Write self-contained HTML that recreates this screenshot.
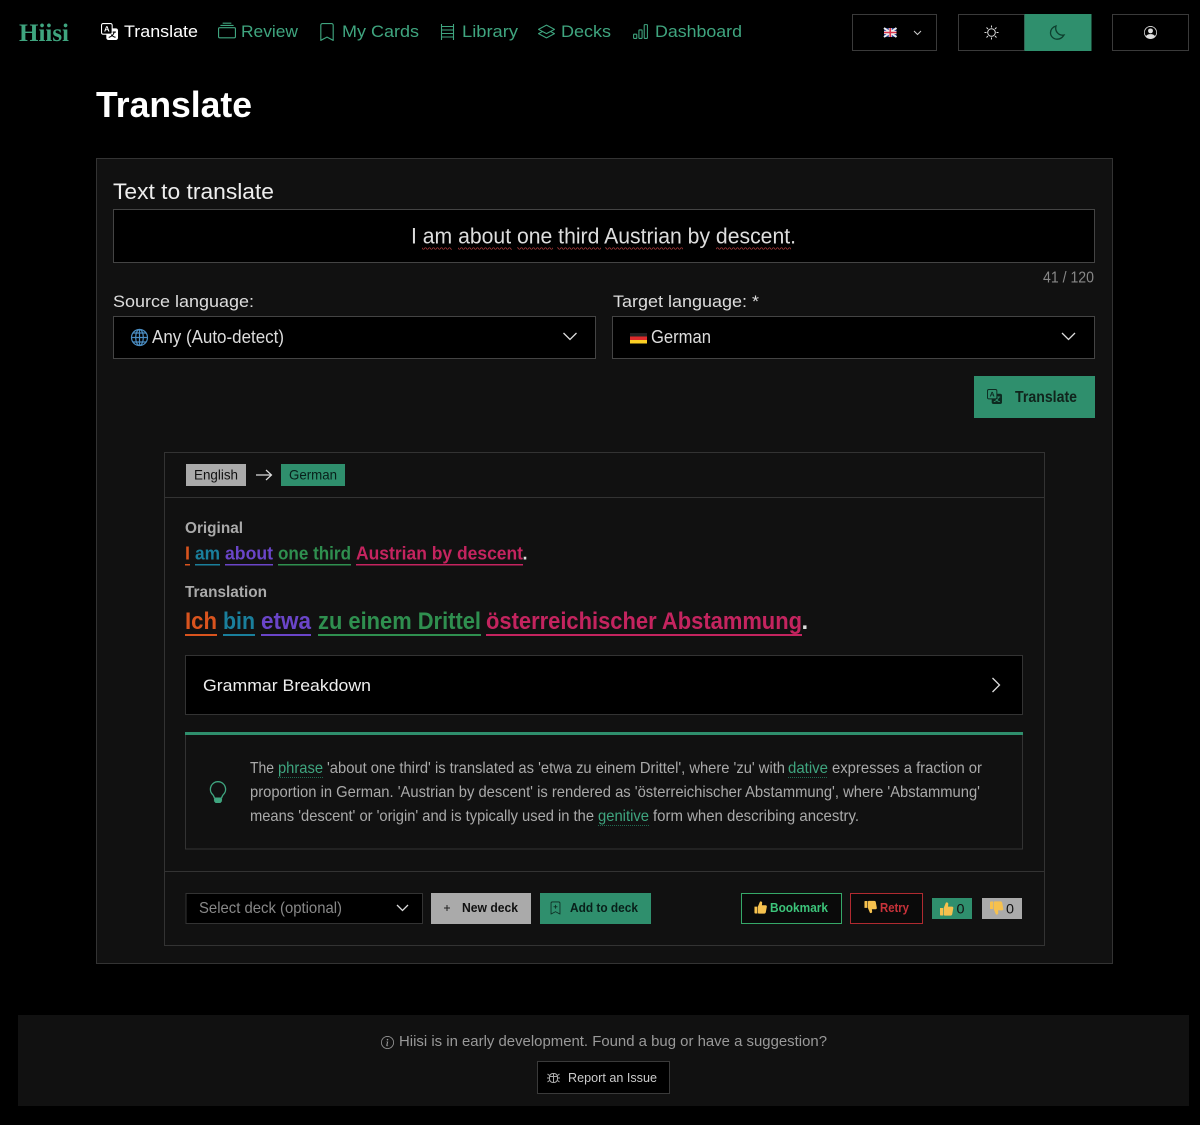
<!DOCTYPE html>
<html lang="en"><head><meta charset="utf-8"><title>Hiisi - Translate</title>
<style>
html,body{margin:0;padding:0;background:#000;width:1200px;height:1125px;overflow:hidden}
svg{display:block}
text{font-family:"Liberation Sans",sans-serif;white-space:pre}
.g{fill:#3fa57f}.bd{stroke:#3a3a3a;fill:#000}
</style></head><body>
<svg width="1200" height="1125" viewBox="0 0 1200 1125" xmlns="http://www.w3.org/2000/svg">
<defs>
<pattern id="wave" width="4" height="3" patternUnits="userSpaceOnUse" x="0" y="247"><path d="M0 2.2L1 .8L2 .8L3 2.2L4 2.2" stroke="#b8403f" stroke-width=".7" fill="none"/></pattern>
<symbol id="tr" viewBox="0 0 16 16"><path d="M4.545 6.714 4.11 8H3l1.862-5h1.284L8 8H6.833l-.435-1.286zm1.634-.736L5.5 3.956h-.049l-.679 2.022z"/><path d="M0 2a2 2 0 0 1 2-2h7a2 2 0 0 1 2 2v3h3a2 2 0 0 1 2 2v7a2 2 0 0 1-2 2H7a2 2 0 0 1-2-2v-3H2a2 2 0 0 1-2-2zm2-1a1 1 0 0 0-1 1v7a1 1 0 0 0 1 1h7a1 1 0 0 0 1-1V2a1 1 0 0 0-1-1zm7.138 9.995q.289.451.63.846c-.748.575-1.673 1.001-2.768 1.292.178.217.451.635.555.867 1.125-.359 2.08-.844 2.886-1.494.777.665 1.739 1.165 2.93 1.472.133-.254.414-.673.629-.89-1.125-.253-2.057-.694-2.82-1.284.681-.747 1.222-1.651 1.621-2.757H14V8h-3v1.047h.765c-.318.844-.74 1.546-1.272 2.13a6 6 0 0 1-.415-.492 2 2 0 0 1-.94.31"/></symbol>
<symbol id="up" viewBox="0 0 14 14"><path fill="#f6c14e" d="M.5 6h3.200v7.500H1.300a.8.8 0 0 1-.8-.8zM4.300 5.800 6.300.9c.4-.9 2.500-.6 2.500 1L8.500 4.600h4c1 0 1.500.9 1.300 1.700l-1.100 6c-.2.900-.8 1.300-1.600 1.300H5.300c-.6 0-1-.4-1-1z"/></symbol>
<symbol id="dn" viewBox="0 0 14 14"><g transform="matrix(1 0 0 -1 0 14)"><path fill="#f6c14e" d="M.5 6h3.200v7.500H1.300a.8.8 0 0 1-.8-.8zM4.300 5.800 6.300.9c.4-.9 2.500-.6 2.500 1L8.500 4.600h4c1 0 1.500.9 1.300 1.700l-1.100 6c-.2.900-.8 1.300-1.600 1.300H5.300c-.6 0-1-.4-1-1z"/></g></symbol>
</defs>
<rect width="1200" height="1125" fill="#000"/>

<!-- NAV -->
<text x="19" y="41" font-size="25" font-weight="bold" style="font-family:'Liberation Serif',serif" class="g" textLength="50" lengthAdjust="spacingAndGlyphs">Hiisi</text>
<use href="#tr" x="101" y="23" width="17" height="17" fill="#fff"/>
<text x="124" y="37" font-size="17" fill="#fff" textLength="74" lengthAdjust="spacingAndGlyphs">Translate</text>
<svg x="218" y="22" width="18" height="18" viewBox="0 0 16 16" class="g"><path d="M2.5 3.5a.5.5 0 0 1 0-1h11a.5.5 0 0 1 0 1zm2-2a.5.5 0 0 1 0-1h7a.5.5 0 0 1 0 1zM0 13a1.5 1.5 0 0 0 1.5 1.5h13A1.5 1.5 0 0 0 16 13V6a1.5 1.5 0 0 0-1.5-1.5h-13A1.5 1.5 0 0 0 0 6zm1.5.5A.5.5 0 0 1 1 13V6a.5.5 0 0 1 .5-.5h13a.5.5 0 0 1 .5.5v7a.5.5 0 0 1-.5.5z"/></svg>
<text x="241" y="37" font-size="17" class="g" textLength="57" lengthAdjust="spacingAndGlyphs">Review</text>
<svg x="318" y="23" width="18" height="18" viewBox="0 0 16 16" class="g"><path d="M2 2a2 2 0 0 1 2-2h8a2 2 0 0 1 2 2v13.5a.5.5 0 0 1-.777.416L8 13.101l-5.223 2.815A.5.5 0 0 1 2 15.5zm2-1a1 1 0 0 0-1 1v12.566l4.723-2.482a.5.5 0 0 1 .554 0L13 14.566V2a1 1 0 0 0-1-1z"/></svg>
<text x="342" y="37" font-size="17" class="g" textLength="77" lengthAdjust="spacingAndGlyphs">My Cards</text>
<path d="M441.500 24v16M453.500 24v16M441.500 26.500h12M441.500 30h12M441.500 33.500h12M441.500 37h12" fill="none" stroke="#3fa57f" stroke-width="1.100"/>
<text x="462" y="37" font-size="17" class="g" textLength="56" lengthAdjust="spacingAndGlyphs">Library</text>
<svg x="538" y="23" width="17" height="17" viewBox="0 0 16 16" class="g"><path d="M8.235 1.559a.5.5 0 0 0-.47 0l-7.5 4a.5.5 0 0 0 0 .882L3.188 8 .264 9.559a.5.5 0 0 0 0 .882l7.5 4a.5.5 0 0 0 .47 0l7.5-4a.5.5 0 0 0 0-.882L12.813 8l2.922-1.559a.5.5 0 0 0 0-.882zm3.515 7.008L14.438 10 8 13.433 1.562 10 4.250 8.567l3.515 1.874a.5.5 0 0 0 .47 0zM8 9.433 1.562 6 8 2.567 14.438 6z"/></svg>
<text x="561" y="37" font-size="17" class="g" textLength="50" lengthAdjust="spacingAndGlyphs">Decks</text>
<svg x="632" y="23" width="17" height="17" viewBox="0 0 16 16" class="g"><path d="M4 11H2v3h2zm5-4H7v7h2zm5-5v12h-2V2zm-2-1a1 1 0 0 0-1 1v12a1 1 0 0 0 1 1h2a1 1 0 0 0 1-1V2a1 1 0 0 0-1-1zM6 7a1 1 0 0 1 1-1h2a1 1 0 0 1 1 1v7a1 1 0 0 1-1 1H7a1 1 0 0 1-1-1zm-5 4a1 1 0 0 1 1-1h2a1 1 0 0 1 1 1v3a1 1 0 0 1-1 1H2a1 1 0 0 1-1-1z"/></svg>
<text x="655" y="37" font-size="17" class="g" textLength="87" lengthAdjust="spacingAndGlyphs">Dashboard</text>

<!-- top right controls -->
<rect x="852.500" y="14.500" width="84" height="36" class="bd"/>
<g transform="translate(884 28)"><rect width="12.500" height="9" rx="1" fill="#2b3f8f"/><path d="M0 0L12.500 9M12.500 0L0 9" stroke="#eee" stroke-width="2"/><path d="M6.250 0v9M0 4.500h12.500" stroke="#eee" stroke-width="3"/><path d="M6.250 0v9M0 4.500h12.500" stroke="#d8324a" stroke-width="1.600"/></g>
<path d="M914 31l3.500 3.500L921 31" fill="none" stroke="#ccc" stroke-width="1"/>
<rect x="958.500" y="14.500" width="66" height="36" class="bd"/>
<rect x="1024.500" y="14" width="67" height="37" fill="#2f8f6d"/>
<g stroke="#ddd" stroke-width="1" fill="none"><circle cx="991.500" cy="32.500" r="3.800"/><path d="M991.500 25.500v2M991.500 37.500v2M984.500 32.500h2M996.500 32.500h2M986.500 27.500l1.500 1.500M995 36l1.500 1.500M986.500 37.500l1.500-1.500M995 29l1.500-1.500"/></g>
<path d="M1056 26c-3.500 1-5.500 3.800-5.500 6.700 0 3.700 3 6.500 6.500 6.500 3 0 5.500-1.700 7-4.200-5 1-9.500-3.500-8-9z" fill="none" stroke="#0d3f2e" stroke-width="1.300"/>
<rect x="1112.500" y="14.500" width="76" height="36" class="bd"/>
<svg x="1144" y="26" width="13" height="13" viewBox="0 0 16 16" fill="#ddd"><path d="M11 6a3 3 0 1 1-6 0 3 3 0 0 1 6 0"/><path d="M0 8a8 8 0 1 1 16 0A8 8 0 0 1 0 8m8-7a7 7 0 0 0-5.468 11.370C3.242 11.226 4.805 10 8 10s4.757 1.225 5.468 2.370A7 7 0 0 0 8 1"/></svg>

<!-- TITLE -->
<text x="96" y="117" font-size="36" font-weight="bold" fill="#fff" textLength="156" lengthAdjust="spacingAndGlyphs">Translate</text>

<!-- MAIN CARD -->
<rect x="96.500" y="158.500" width="1016" height="805" fill="#111" stroke="#333"/>
<text x="113" y="199" font-size="22" fill="#eee" textLength="161" lengthAdjust="spacingAndGlyphs">Text to translate</text>
<rect x="113.500" y="209.500" width="981" height="53" fill="#000" stroke="#444"/>
<text x="411" y="243.500" font-size="22" fill="#ddd" textLength="385" lengthAdjust="spacingAndGlyphs">I am about one third Austrian by descent.</text>
<g fill="url(#wave)"><rect x="422" y="247" width="30" height="3"/><rect x="458" y="247" width="54" height="3"/><rect x="517" y="247" width="36" height="3"/><rect x="557" y="247" width="44" height="3"/><rect x="605" y="247" width="78" height="3"/><rect x="716" y="247" width="75" height="3"/></g>
<text x="1043" y="282.500" font-size="16" fill="#888" textLength="51" lengthAdjust="spacingAndGlyphs">41 / 120</text>

<text x="113" y="307" font-size="17" fill="#ddd" textLength="141" lengthAdjust="spacingAndGlyphs">Source language:</text>
<rect x="113.500" y="316.500" width="482" height="42" fill="#000" stroke="#444"/>
<g fill="none" stroke="#4b8ec4" stroke-width="1.200"><circle cx="139.500" cy="337.500" r="8"/><ellipse cx="139.500" cy="337.500" rx="3.800" ry="8"/><path d="M131.500 337.500h16M132.800 333h13.400M132.800 342h13.400M139.500 329.500v16"/></g>
<text x="152" y="343" font-size="18" fill="#ddd" textLength="132" lengthAdjust="spacingAndGlyphs">Any (Auto-detect)</text>
<path d="M563.500 333l6.500 6.500 6.500-6.500" fill="none" stroke="#ddd" stroke-width="1.300"/>

<text x="613" y="307" font-size="17" fill="#ddd" textLength="146" lengthAdjust="spacingAndGlyphs">Target language: *</text>
<rect x="612.500" y="316.500" width="482" height="42" fill="#000" stroke="#444"/>
<rect x="630" y="333" width="17" height="3.500" fill="#222"/><rect x="630" y="336.500" width="17" height="3.500" fill="#dc2a2a"/><rect x="630" y="340" width="17" height="3.500" fill="#fbcf24"/>
<text x="651" y="343" font-size="18" fill="#ddd" textLength="60" lengthAdjust="spacingAndGlyphs">German</text>
<path d="M1062 333l6.500 6.500 6.500-6.500" fill="none" stroke="#ddd" stroke-width="1.300"/>

<rect x="974" y="376" width="121" height="42" fill="#2f8f6d"/>
<use href="#tr" x="987" y="389" width="15" height="15" fill="#0d2a20"/>
<text x="1015" y="402" font-size="16" font-weight="bold" fill="#10241c" textLength="62" lengthAdjust="spacingAndGlyphs">Translate</text>

<!-- RESULT CARD -->
<rect x="164.500" y="452.500" width="880" height="493" fill="#111" stroke="#333"/>
<path d="M165 497.500h879M165 871.500h879" stroke="#333"/>
<rect x="186" y="464" width="60" height="22" fill="#aaa"/>
<text x="194" y="479.500" font-size="14" fill="#111" textLength="44" lengthAdjust="spacingAndGlyphs">English</text>
<path d="M256 475h15M266 470l5.500 5-5.500 5" fill="none" stroke="#ddd" stroke-width="1.200"/>
<rect x="281" y="464" width="64" height="22" fill="#2f8f6d"/>
<text x="289" y="479.500" font-size="14" fill="#08201a" textLength="48" lengthAdjust="spacingAndGlyphs">German</text>

<text x="185" y="533" font-size="16" font-weight="bold" fill="#aaa" textLength="58" lengthAdjust="spacingAndGlyphs">Original</text>
<g font-size="18" font-weight="bold">
<text x="185" y="559.500" fill="#d9541e" textLength="5" lengthAdjust="spacingAndGlyphs">I</text>
<text x="195" y="559.500" fill="#1a7f9c" textLength="25" lengthAdjust="spacingAndGlyphs">am</text>
<text x="225" y="559.500" fill="#6a45c8" textLength="48" lengthAdjust="spacingAndGlyphs">about</text>
<text x="278" y="559.500" fill="#2f8f4f" textLength="73" lengthAdjust="spacingAndGlyphs">one third</text>
<text x="356" y="559.500" fill="#c4245f" textLength="167" lengthAdjust="spacingAndGlyphs">Austrian by descent</text>
<text x="522.500" y="559.500" fill="#ddd">.</text>
</g>
<rect x="185" y="564" width="5" height="1.500" fill="#d9541e"/><rect x="195" y="564" width="25" height="1.500" fill="#1a7f9c"/><rect x="225" y="564" width="48" height="1.500" fill="#6a45c8"/><rect x="278" y="564" width="73" height="1.500" fill="#2f8f4f"/><rect x="356" y="564" width="167" height="1.500" fill="#c4245f"/>

<text x="185" y="597" font-size="16" font-weight="bold" fill="#aaa" textLength="82" lengthAdjust="spacingAndGlyphs">Translation</text>
<g font-size="24" font-weight="bold">
<text x="185" y="629" fill="#d9541e" textLength="32" lengthAdjust="spacingAndGlyphs">Ich</text>
<text x="223" y="629" fill="#1a7f9c" textLength="32" lengthAdjust="spacingAndGlyphs">bin</text>
<text x="261" y="629" fill="#6a45c8" textLength="50" lengthAdjust="spacingAndGlyphs">etwa</text>
<text x="318" y="629" fill="#2f8f4f" textLength="163" lengthAdjust="spacingAndGlyphs">zu einem Drittel</text>
<text x="486" y="629" fill="#c4245f" textLength="316" lengthAdjust="spacingAndGlyphs">österreichischer Abstammung</text>
<text x="801.500" y="629" fill="#ddd">.</text>
</g>
<rect x="185" y="634" width="32" height="2" fill="#d9541e"/><rect x="223" y="634" width="32" height="2" fill="#1a7f9c"/><rect x="261" y="634" width="50" height="2" fill="#6a45c8"/><rect x="318" y="634" width="163" height="2" fill="#2f8f4f"/><rect x="486" y="634" width="316" height="2" fill="#c4245f"/>

<rect x="185.500" y="655.500" width="837" height="59" fill="#000" stroke="#333"/>
<text x="203" y="691" font-size="17" fill="#eee" textLength="168" lengthAdjust="spacingAndGlyphs">Grammar Breakdown</text>
<path d="M992.500 678l7 7-7 7" fill="none" stroke="#ddd" stroke-width="1.300"/>

<rect x="185.500" y="733.500" width="837" height="115.500" fill="#111" stroke="#333"/>
<rect x="185" y="732" width="838" height="3" fill="#2f8f6d"/>
<svg x="207" y="781" width="22" height="22" viewBox="0 0 16 16" class="g"><path d="M2 6a6 6 0 1 1 10.174 4.310c-.203.196-.359.4-.453.619l-.762 1.769A.5.5 0 0 1 10.500 13a.5.5 0 0 1 0 1 .5.5 0 0 1 0 1l-.224.447a1 1 0 0 1-.894.553H6.618a1 1 0 0 1-.894-.553L5.500 15a.5.5 0 0 1 0-1 .5.5 0 0 1 0-1 .5.5 0 0 1-.46-.302l-.761-1.770a2 2 0 0 0-.453-.618A5.980 5.980 0 0 1 2 6m6-5a5 5 0 0 0-3.479 8.592c.263.254.514.564.676.941L5.830 12h4.342l.632-1.467c.162-.377.413-.687.676-.941A5 5 0 0 0 8 1"/></svg>
<g font-size="16" fill="#aaa">
<text x="250" y="773" textLength="24" lengthAdjust="spacingAndGlyphs">The</text>
<text x="278" y="773" class="g" textLength="45" lengthAdjust="spacingAndGlyphs">phrase</text>
<text x="327" y="773" textLength="458" lengthAdjust="spacingAndGlyphs">'about one third' is translated as 'etwa zu einem Drittel', where 'zu' with</text>
<text x="788" y="773" class="g" textLength="40" lengthAdjust="spacingAndGlyphs">dative</text>
<text x="832" y="773" textLength="150" lengthAdjust="spacingAndGlyphs">expresses a fraction or</text>
<text x="250" y="797" textLength="730" lengthAdjust="spacingAndGlyphs">proportion in German. 'Austrian by descent' is rendered as 'österreichischer Abstammung', where 'Abstammung'</text>
<text x="250" y="821" textLength="344" lengthAdjust="spacingAndGlyphs">means 'descent' or 'origin' and is typically used in the</text>
<text x="598" y="821" class="g" textLength="51" lengthAdjust="spacingAndGlyphs">genitive</text>
<text x="653" y="821" textLength="206" lengthAdjust="spacingAndGlyphs">form when describing ancestry.</text>
</g>
<path d="M278 777.500h45M788 777.500h40M598 825.500h51" stroke="#1f6a50" stroke-width="1" stroke-dasharray="1 1"/>

<!-- actions -->
<rect x="186" y="893.500" width="236.500" height="30" fill="#000" stroke="#333"/>
<text x="199" y="913" font-size="16" fill="#888" textLength="143" lengthAdjust="spacingAndGlyphs">Select deck (optional)</text>
<path d="M397 905l5.500 5.500 5.500-5.500" fill="none" stroke="#ddd" stroke-width="1.300"/>
<rect x="431" y="893" width="100" height="31" fill="#aaa"/>
<path d="M444 908h6M447 905v6" stroke="#222" stroke-width="1"/>
<text x="462" y="912" font-size="13" font-weight="bold" fill="#111" textLength="56" lengthAdjust="spacingAndGlyphs">New deck</text>
<rect x="540" y="893" width="111" height="31" fill="#2f8f6d"/>
<svg x="549" y="901" width="13" height="14" viewBox="0 0 16 16" fill="#0d2a20"><path d="M2 2a2 2 0 0 1 2-2h8a2 2 0 0 1 2 2v13.500a.5.5 0 0 1-.777.416L8 13.101l-5.223 2.815A.5.5 0 0 1 2 15.500zm2-1a1 1 0 0 0-1 1v12.566l4.723-2.482a.5.5 0 0 1 .554 0L13 14.566V2a1 1 0 0 0-1-1z"/><path d="M8 4a.5.5 0 0 1 .5.5V6H10a.5.5 0 0 1 0 1H8.500v1.500a.5.5 0 0 1-1 0V7H6a.5.5 0 0 1 0-1h1.500V4.500A.5.5 0 0 1 8 4"/></svg>
<text x="570" y="912" font-size="13" font-weight="bold" fill="#08201a" textLength="68" lengthAdjust="spacingAndGlyphs">Add to deck</text>

<rect x="741.500" y="893.500" width="100" height="30" fill="#0a0a0a" stroke="#35a868"/>
<use href="#up" x="754" y="900.500" width="13" height="14"/>
<text x="770" y="912" font-size="13" font-weight="bold" fill="#3cc47a" textLength="58" lengthAdjust="spacingAndGlyphs">Bookmark</text>
<rect x="850.500" y="893.500" width="72" height="30" fill="#0a0a0a" stroke="#b02a30"/>
<use href="#dn" x="864" y="900" width="13" height="14"/>
<text x="880" y="912" font-size="13" font-weight="bold" fill="#c8323a" textLength="29" lengthAdjust="spacingAndGlyphs">Retry</text>
<rect x="932" y="898" width="40" height="21" fill="#2f8f6d"/>
<use href="#up" x="939.500" y="902" width="14" height="14"/>
<text x="956.500" y="913.500" font-size="14" fill="#111" textLength="8" lengthAdjust="spacingAndGlyphs">0</text>
<rect x="982" y="898" width="40" height="21" fill="#aaa"/>
<use href="#dn" x="989.500" y="901" width="14" height="14"/>
<text x="1006" y="913.500" font-size="14" fill="#111" textLength="8" lengthAdjust="spacingAndGlyphs">0</text>

<!-- FOOTER -->
<rect x="18" y="1015" width="1171" height="91" fill="#111"/>
<svg x="381" y="1036" width="13" height="13" viewBox="0 0 16 16" fill="#999"><path d="M8 15A7 7 0 1 1 8 1a7 7 0 0 1 0 14m0 1A8 8 0 1 0 8 0a8 8 0 0 0 0 16"/><path d="m8.930 6.588-1 4.705c-.07.34.029.533.304.533.194 0 .487-.07.686-.246l-.088.416c-.287.346-.92.598-1.465.598-.703 0-1.002-.422-.808-1.319l.738-3.468c.064-.293.006-.399-.287-.47l-.451-.081.082-.381 2.290-.287zM8 5.500a1 1 0 1 1 0-2 1 1 0 0 1 0 2"/></svg>
<text x="399" y="1046" font-size="14.500" fill="#999" textLength="428" lengthAdjust="spacingAndGlyphs">Hiisi is in early development. Found a bug or have a suggestion?</text>
<rect x="537.500" y="1061.500" width="132" height="32" fill="#000" stroke="#3a3a3a"/>
<g fill="none" stroke="#aaa" stroke-width="1"><rect x="549.500" y="1073.500" width="8" height="9" rx="3.500"/><path d="M553.500 1073.500v9M549.500 1076.500h8M547.500 1074l2 1.500M559.500 1074l-2 1.500M547 1078h2.500M560 1078h-2.500M547.500 1082l2-1.500M559.500 1082l-2-1.500"/></g>
<text x="568" y="1082" font-size="13" fill="#ccc" textLength="89" lengthAdjust="spacingAndGlyphs">Report an Issue</text>
</svg>
</body></html>
